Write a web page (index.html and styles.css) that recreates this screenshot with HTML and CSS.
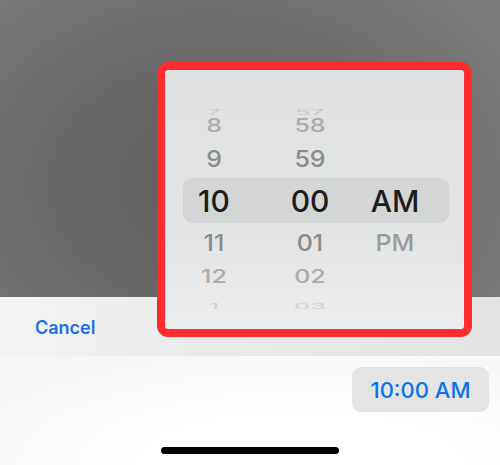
FILE: index.html
```html
<!DOCTYPE html>
<html lang="en">

<head>
    <meta charset="UTF-8">
    <meta name="viewport" content="width=device-width, initial-scale=1.0">
    <title>Time Picker</title>
    <link rel="stylesheet" href="styles.css">
</head>

<body>
    <div class="backdrop"></div>

    <div class="sheet">
        <div class="toolbar">
            <span class="cancel">Cancel</span>
        </div>
        <div class="sheet-body">
            <div class="time-pill">10:00 AM</div>
            <div class="home-bar"></div>
        </div>
    </div>

    <!-- wheel picker popover, highlighted -->
    <div class="picker">
        <div class="row far top"><span>7</span><span>57</span><span></span></div>
        <div class="row near top"><span>8</span><span>58</span><span></span></div>
        <div class="row close top"><span>9</span><span>59</span><span></span></div>
        <div class="row selected"><span>10</span><span>00</span><span>AM</span></div>
        <div class="row close bottom"><span>11</span><span>01</span><span>PM</span></div>
        <div class="row near bottom"><span>12</span><span>02</span><span></span></div>
        <div class="row far bottom"><span>1</span><span>03</span><span></span></div>
    </div>
</body>

</html>
```

FILE: styles.css
```css
body {
    margin: 0;
    width: 500px;
    height: 465px;
    overflow: hidden;
    font-family: 'Inter', 'Liberation Sans', sans-serif;
    background: #ffffff;
    position: relative;
}

.backdrop {
    height: 297px;
    background: radial-gradient(ellipse 70% 90% at 42% 62%, #5d5e5d 0%, #676867 45%, #7b7c7b 100%);
}

.toolbar {
    height: 59px;
    display: flex;
    align-items: center;
    padding-left: 35px;
    background: linear-gradient(90deg, #f3f4f4 0%, #e9eaea 40%, #e2e3e3 100%);
}

.cancel {
    font-size: 18px;
    font-weight: 600;
    color: #1d6fe3;
    margin-top: 1px;
}

.sheet-body {
    height: 109px;
    display: flex;
    flex-direction: column;
    align-items: flex-end;
    background: radial-gradient(ellipse 80% 120% at 60% 100%, #ffffff 40%, #f6f6f6 100%);
}

.time-pill {
    margin: 11px 11px 0 0;
    width: 137px;
    height: 45px;
    border-radius: 9px;
    background: #e4e4e4;
    color: #0b73e9;
    font-size: 22px;
    font-weight: 500;
    display: flex;
    align-items: center;
    justify-content: center;
}

.home-bar {
    align-self: center;
    margin-top: 35px;
    width: 178px;
    height: 7px;
    border-radius: 4px;
    background: #000000;
}

/* the popover sits over both the backdrop and the sheet */
.picker {
    position: absolute;
    left: 157px;
    top: 62px;
    width: 299px;
    height: 232px;
    border: 8px solid #fe2c2f;
    border-radius: 11px;
    padding-top: 27px;
    background: linear-gradient(180deg, #e0e1e1 0%, #e2e3e3 60%, #ebecec 100%);
    overflow: hidden;
}

.row {
    display: grid;
    grid-template-columns: 62px 130px 40px;
    margin: 0 15px 0 18px;
    font-size: 25px;
    font-weight: 500;
    color: #8c8c8c;
}

.row span {
    display: flex;
    justify-content: center;
    align-items: center;
    white-space: nowrap;
}

.row.close.top { height: 38px; }
.row.close.bottom { height: 39px; }
.row.close span { transform: scaleY(0.93); }
.row.close span:last-child { color: #9b9b9b; }

.row.near { height: 29px; color: #ababab; }
.row.near span { transform: scaleY(0.72); }

.row.far.top { height: 14px; color: #cdcdcd; }
.row.far.bottom { height: 13px; color: #d2d2d2; }
.row.far span { transform: scaleY(0.3); }

.row.selected {
    height: 45px;
    border-radius: 9px;
    background: #d4d5d5;
    font-size: 30px;
    color: #1c1c1c;
}
```
